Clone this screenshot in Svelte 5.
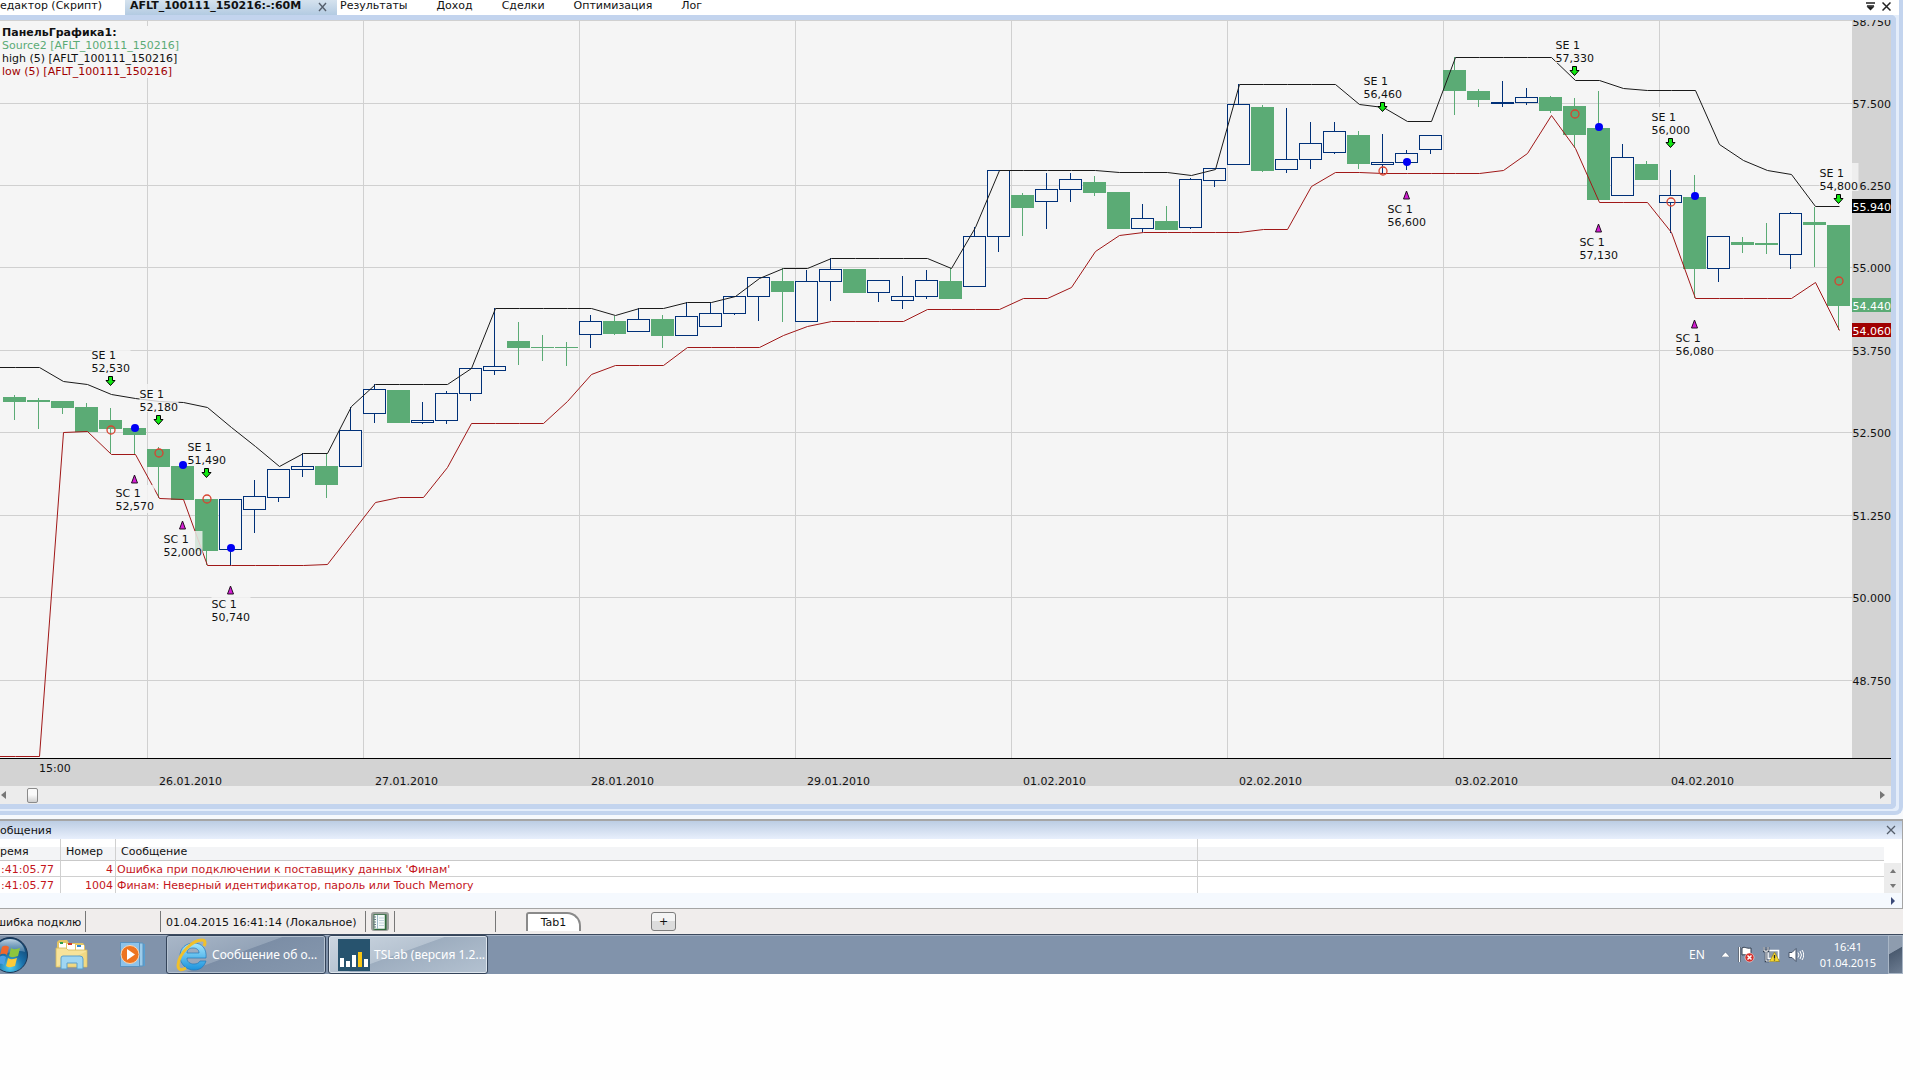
<script>
  const tabs = ['Результаты', 'Доход', 'Сделки', 'Оптимизация', 'Лог'];

  // body top, body bottom, wick top, wick bottom, 1 = falling (filled)
  const bars = [
    [397, 402, 395, 420, 1], [400, 402, 398, 429, 1], [401, 408, 401, 414, 1],
    [407, 432, 403, 432, 1], [420, 429, 408, 454, 1], [428, 435, 428, 454, 1],
    [449, 467, 447, 498, 1], [466, 500, 466, 500, 1], [499, 551, 499, 565, 1],
    [499, 550, 499, 565, 0], [496, 510, 480, 533, 0], [469, 498, 469, 502, 0],
    [466, 470, 453, 477, 0], [466, 485, 454, 498, 1], [430, 467, 407, 467, 0],
    [389, 414, 384, 423, 0], [390, 423, 390, 423, 1], [420, 423, 402, 424, 0],
    [393, 421, 391, 424, 0], [368, 394, 368, 401, 0], [366, 371, 308, 375, 0],
    [341, 348, 322, 365, 1], [347, 348, 335, 361, 1], [347, 348, 342, 366, 1],
    [321, 335, 315, 348, 0], [321, 334, 316, 335, 1], [319, 332, 308, 332, 0],
    [319, 336, 315, 348, 1], [316, 336, 302, 336, 0], [313, 327, 302, 327, 0],
    [296, 314, 296, 315, 0], [277, 297, 277, 321, 0], [281, 292, 268, 322, 1],
    [281, 322, 270, 322, 0], [269, 282, 258, 301, 0], [269, 293, 269, 293, 1],
    [280, 293, 280, 302, 0], [296, 301, 276, 309, 0], [280, 297, 270, 299, 0],
    [281, 299, 268, 299, 1], [236, 287, 227, 287, 0], [170, 237, 170, 252, 0],
    [195, 208, 193, 236, 1], [189, 202, 173, 229, 0], [179, 190, 173, 202, 0],
    [182, 193, 176, 196, 1], [192, 229, 192, 229, 1], [218, 229, 204, 232, 0],
    [221, 230, 206, 230, 1], [179, 228, 178, 229, 0], [168, 181, 168, 187, 0],
    [104, 165, 84, 165, 0], [107, 171, 105, 172, 1], [159, 170, 108, 173, 0],
    [143, 160, 122, 169, 0], [131, 153, 122, 154, 0], [135, 164, 131, 169, 1],
    [162, 165, 134, 173, 0], [153, 163, 150, 170, 0], [135, 150, 135, 154, 0],
    [70, 91, 57, 115, 1], [91, 100, 89, 107, 1], [102, 104, 81, 107, 0],
    [97, 103, 88, 105, 0], [97, 111, 96, 113, 1], [106, 135, 98, 148, 1],
    [128, 200, 91, 200, 1], [157, 196, 144, 196, 0], [164, 180, 161, 180, 1],
    [195, 203, 170, 233, 0], [197, 269, 175, 298, 1], [236, 269, 236, 282, 0],
    [242, 245, 237, 253, 1], [243, 245, 223, 254, 1], [213, 255, 212, 269, 0],
    [222, 225, 207, 267, 1], [225, 306, 225, 330, 1]
  ];

  const high = [
    367, 367, 381, 384, 394, 398, 401, 402, 407, 427, 446, 466, 453, 453, 406, 384, 384, 384, 384,
    368, 308, 308, 308, 308, 308, 315, 308, 308, 302, 302, 296, 278, 268, 268, 258, 258, 258, 258,
    258, 268, 227, 170, 170, 170, 170, 170, 172, 172, 172, 175, 169, 84, 84, 84, 84, 84, 104, 107,
    121, 121, 57, 57, 57, 57, 57, 80, 80, 88, 90, 90, 90, 144, 160, 170, 174, 206, 206
  ];

  const low = [
    756, 756, 432, 431, 454, 454, 498, 499, 565, 565, 565, 565, 565, 564, 533, 502, 497, 497, 467,
    423, 423, 423, 423, 401, 374, 365, 365, 365, 347, 347, 347, 347, 335, 326, 321, 321, 321, 321,
    309, 309, 309, 309, 298, 298, 287, 251, 235, 232, 232, 232, 232, 232, 229, 229, 186, 172, 172,
    173, 173, 173, 173, 173, 170, 153, 115, 148, 202, 202, 202, 232, 298, 298, 298, 298, 298, 282,
    330
  ];

  const STEP = 24;
  const cx = (i) => 14.5 + STEP * i;
  const line = (ys) => `0,${ys[0] + 0.5} ` + ys.map((y, i) => `${cx(i) + 1},${y + 0.5}`).join(' ');

  // bar index, marker y, fill y, price
  const entries = [
    [4, 376, 430, '52,530'], [6, 415, 453, '52,180'], [8, 468, 499, '51,490'],
    [57, 102, 171, '56,460'], [65, 66, 114, '57,330'], [69, 138, 202, '56,000'],
    [76, 194, 281, '54,800']
  ];
  const exits = [
    [5, 474, 428, '52,570'], [7, 520, 465, '52,000'], [9, 585, 548, '50,740'],
    [58, 190, 162, '56,600'], [66, 223, 127, '57,130'], [70, 319, 196, '56,080']
  ];

  const prices = [
    ['58.750', 21], ['57.500', 103], ['6.250', 185], ['55.000', 267], ['53.750', 350],
    ['52.500', 432], ['51.250', 515], ['50.000', 597], ['48.750', 680]
  ];
  const days = [
    '26.01.2010', '27.01.2010', '28.01.2010', '29.01.2010',
    '01.02.2010', '02.02.2010', '03.02.2010', '04.02.2010'
  ];
  const tags = [['55.940', 199, '#000000'], ['54.440', 298, '#5bab75'], ['54.060', 323, '#a00000']];

  const messages = [
    { time: ':41:05.77', code: 4, text: "Ошибка при подключении к поставщику данных 'Финам'" },
    { time: ':41:05.77', code: 1004, text: 'Финам: Неверный идентификатор, пароль или Touch Memory' }
  ];

  let scroll = $state(7);
</script>

<div class="screen">
  <main class="document">
    <nav class="tabs">
      <a class="first" href="#script">едактор (Скрипт)</a>
      <div class="current">
        <a href="#chart">AFLT_100111_150216:-:60М</a>
        <button aria-label="Закрыть вкладку">
          <svg width="10" height="10" viewBox="0 0 10 10"><path d="M1 1l7 8M8 1l-7 8" stroke="#555e6b" stroke-width="1.4" /></svg>
        </button>
      </div>
      {#each tabs as tab}
        <a class="tab" href="#{tab}">{tab}</a>
      {/each}
      <div class="tools">
        <button aria-label="Список вкладок">
          <svg width="9" height="9" viewBox="0 0 9 9"><path d="M0 1h9M1 4h7" stroke="#222" stroke-width="1.5" /><path d="M0.500 4.500h8l-4 4z" fill="#222" /></svg>
        </button>
        <button aria-label="Закрыть">
          <svg width="9" height="9" viewBox="0 0 9 9"><path d="M0.500 0.500l8 8M8.500 0.500l-8 8" stroke="#222" stroke-width="1.5" /></svg>
        </button>
      </div>
    </nav>

    <section class="pane">
      <div class="legend">
        <strong>ПанельГрафика1:</strong>
        <span class="source">Source2 [AFLT_100111_150216]</span>
        <span>high (5) [AFLT_100111_150216]</span>
        <span class="low">low (5) [AFLT_100111_150216]</span>
      </div>

      <svg class="chart" viewBox="0 20 1891 766">
        <rect x="0" y="20" width="1852" height="738" fill="#f5f5f5" />
        <rect x="1852" y="20" width="39" height="738" fill="#d3d3d3" />
        <rect x="0" y="758" width="1891" height="28" fill="#d3d3d3" />

        <g class="grid">
          <path d="M0 20.500H1852" />
          {#each prices.slice(1) as [, y]}
            <path d="M0 {y + 0.5}H1852" />
          {/each}
          {#each days as _, i}
            <path d="M{147.5 + i * 216} 20V758" />
          {/each}
        </g>

        {#each prices as [label, y]}
          <text class="price" x="1891" y={y + 5}>{label}</text>
        {/each}

        <g class="bars">
          {#each bars as [top, bottom, hi, lo, down], i}
            {#if down}
              <path d="M{cx(i)} {hi}V{lo}" stroke="#5bab75" />
              <rect x={cx(i) - 11.5} y={top} width="23" height={bottom - top} fill="#5bab75" />
            {:else}
              <path d="M{cx(i)} {hi}V{lo}" stroke="#003078" />
              <rect x={cx(i) - 11} y={top + 0.5} width="22" height={bottom - top - 1} fill="#f5f5f5" stroke="#003078" />
            {/if}
          {/each}
        </g>

        <polyline points={line(high)} fill="none" stroke="#1a1a1a" />
        <polyline points={line(low)} fill="none" stroke="#a01818" />

        {#each tags as [label, y, color]}
          <rect x="1852" {y} width="39" height="14" fill={color} />
          <text class="price tag" x="1891" y={y + 12}>{label}</text>
        {/each}

        {#each entries as [i, y, fillY, price]}
          <rect class="halo" x={cx(i) - 19} y={y - 31} width="39" height="28" />
          <text x={cx(i) - 19} y={y - 17}>SE 1</text>
          <text x={cx(i) - 19} y={y - 4}>{price}</text>
          <path d="M{cx(i) - 2} {y + 0.5}h4v4h2.500l-4.500 5l-4.500 -5h2.500z" fill="#12e812" stroke="#000" />
          <circle cx={cx(i) + 0.5} cy={fillY} r="4" fill="none" stroke="#d8432f" stroke-width="1.300" />
        {/each}

        {#each exits as [i, y, fillY, price]}
          <rect class="halo" x={cx(i) - 19} y={y + 11} width="39" height="28" />
          <text x={cx(i) - 19} y={y + 23}>SC 1</text>
          <text x={cx(i) - 19} y={y + 36}>{price}</text>
          <path d="M{cx(i)} {y + 1}l3 8h-6z" fill="#d41cd4" stroke="#221022" />
          <circle cx={cx(i) + 0.5} cy={fillY} r="4" fill="#0000f5" />
        {/each}

        <path d="M0 758.500H1891" stroke="#000" />
        <text x="39" y="772">15:00</text>
        {#each days as day, i}
          <text x={159 + i * 216} y="785">{day}</text>
        {/each}
      </svg>

      <div class="hscroll">
        <button aria-label="Назад"><svg width="5" height="8" viewBox="0 0 5 8"><path d="M5 0v8L0 4z" fill="#777" /></svg></button>
        <input type="range" min="0" max="1000" bind:value={scroll} aria-label="Прокрутка графика" />
        <button aria-label="Вперёд"><svg width="5" height="8" viewBox="0 0 5 8"><path d="M0 0v8l5-4z" fill="#777" /></svg></button>
      </div>
    </section>
  </main>

  <section class="messages">
    <header>
      <span>общения</span>
      <button aria-label="Закрыть сообщения">
        <svg width="10" height="10" viewBox="0 0 10 10"><path d="M1 1l8 8M9 1l-8 8" stroke="#555e6b" stroke-width="1.300" /></svg>
      </button>
    </header>
    <div class="log">
      <table>
        <colgroup><col class="c-time" /><col class="c-code" /><col class="c-text" /><col /></colgroup>
        <thead>
          <tr><th>ремя</th><th>Номер</th><th>Сообщение</th><th></th></tr>
        </thead>
        <tbody>
          {#each messages as m}
            <tr><td>{m.time}</td><td class="num">{m.code}</td><td>{m.text}</td><td></td></tr>
          {/each}
        </tbody>
      </table>
      <div class="vscroll">
        <button aria-label="Вверх"><svg width="6" height="4" viewBox="0 0 6 4"><path d="M0 4h6L3 0z" fill="#777" /></svg></button>
        <button aria-label="Вниз"><svg width="6" height="4" viewBox="0 0 6 4"><path d="M0 0h6L3 4z" fill="#777" /></svg></button>
      </div>
    </div>
    <div class="strip">
      <button aria-label="Вправо"><svg width="4" height="8" viewBox="0 0 4 8"><path d="M0 0v8l4-4z" fill="#3b4a78" /></svg></button>
    </div>
  </section>

  <div class="status">
    <span class="cell state"><span>шибка подключения</span></span>
    <span class="cell blank"></span>
    <span class="cell clock">01.04.2015 16:41:14 (Локальное)</span>
    <span class="cell note">
      <button aria-label="Журнал">
        <svg width="14" height="16" viewBox="0 0 14 16">
          <rect x="1" y="0.500" width="12" height="15" fill="#f4faf8" stroke="#4c7a58" />
          <path d="M12.500 1v14.500H2" fill="none" stroke="#2f6b3c" stroke-width="1.500" />
          <path d="M4.500 1v14" stroke="#9db8c8" />
          <path d="M6 4h5M6 6.500h5M6 9h5M6 11.500h5" stroke="#c2d3dc" />
          <path d="M0 3h3M0 5.500h3M0 8h3M0 10.500h3M0 13h3" stroke="#6d7f86" />
        </svg>
      </button>
    </span>
    <span class="cell space"></span>
    <button class="sheet">Tab1</button>
    <button class="add">+</button>
  </div>

  <footer class="taskbar">
    <button class="start" aria-label="Пуск">
      <svg width="30" height="38" viewBox="0 0 30 38">
        <defs>
          <radialGradient id="orb" cx="0.500" cy="0.850" r="0.850">
            <stop offset="0" stop-color="#4fd0f2" />
            <stop offset="0.450" stop-color="#1b70aa" />
            <stop offset="1" stop-color="#12395f" />
          </radialGradient>
          <linearGradient id="gloss" x1="0" y1="0" x2="0" y2="1">
            <stop offset="0" stop-color="#d4e6f2" stop-opacity="0.900" />
            <stop offset="1" stop-color="#6d9cc0" stop-opacity="0.400" />
          </linearGradient>
        </defs>
        <circle cx="10" cy="19" r="17.500" fill="url(#orb)" stroke="#1c3554" />
        <path d="M-5 17C-4 7 3 3 10 3s14 4 15 13c-9-4-21 5-30 1z" fill="url(#gloss)" />
        <path d="M2 11c3-2 5-1 7 0l-2 8c-2-1-4-2-7 0z" fill="#f0672c" />
        <path d="M11 12c3 2 6 1 9 0l-2 8c-3 1-6 2-9 0z" fill="#8cc63e" />
        <path d="M-1 21c3-2 5-1 7 0l-2 8c-2-1-4-2-7 0z" fill="#4aa0e6" />
        <path d="M8 22c3 2 6 1 9 0l-2 8c-3 1-6 2-9 0z" fill="#fccb3a" />
      </svg>
    </button>
    <button class="pin folder" aria-label="Проводник">
      <svg width="34" height="32" viewBox="0 0 34 32">
        <path d="M2 3l2-2h8l2 3h14l2 3v20H2z" fill="#e3c464" />
        <path d="M4 4h7v6H4zM12 5h8v6h-8zM21 6h8v6h-8z" fill="#fff" />
        <path d="M5 3h3v2H5z" fill="#2f9e4b" /><path d="M13 4h4v2h-4z" fill="#d33a2a" /><path d="M22 6h4v2h-4z" fill="#2e86d0" />
        <path d="M1 9h10l2 2h19v17H1z" fill="#f7e39a" stroke="#d4b85c" stroke-width="0.800" />
        <path d="M1 28L32 12v16z" fill="#edd075" opacity="0.600" />
        <path d="M6 30V19q0-2 2-2h17q3 0 3 3v10h-6v-6H12v6z" fill="#9fd6f2" stroke="#5b9fcb" />
      </svg>
    </button>
    <button class="pin player" aria-label="Проигрыватель">
      <svg width="30" height="28" viewBox="0 0 30 28">
        <path d="M8 2l18 1v22l-18 1z" fill="#5a9fd0" /><path d="M7 2h17v23H7z" fill="#9dcbe9" stroke="#5a93bf" />
        <rect x="1.500" y="1.500" width="19" height="24" fill="#8dc3ea" stroke="#5b93bf" />
        <circle cx="11" cy="13.500" r="9" fill="#ee7420" stroke="#fbd5b0" />
        <path d="M8 8v11l8-5.500z" fill="#fff" />
      </svg>
    </button>
    <button class="task">
      <svg width="32" height="34" viewBox="0 0 32 34">
        <defs>
          <linearGradient id="ie" x1="0" y1="0" x2="0" y2="1">
            <stop offset="0" stop-color="#a4e7fd" />
            <stop offset="1" stop-color="#1b93dd" />
          </linearGradient>
        </defs>
        <path d="M30 20H11c0 4 3 6 7 6 3 0 5-1 6-3h6c-2 6-6 9-12 9C10 32 4 26 4 18S10 5 18 5s13 6 12 15zM11 15h12c0-3-2-5-6-5s-6 2-6 5z" fill="url(#ie)" stroke="#2179ba" stroke-width="0.700" />
        <path d="M28 8c2-4 1-6-2-6C17 2 3 15 2 27c0 5 3 6 8 3" fill="none" stroke="#f0c02c" stroke-width="3" />
      </svg>
      <span>Сообщение об о...</span>
    </button>
    <button class="task active">
      <svg width="32" height="32" viewBox="0 0 32 32">
        <rect width="32" height="32" fill="#27536e" />
        <path d="M2 19h4v9H2zM8 22h4v6H8zM14 16h4v12h-4zM26 20h4v8h-4z" fill="#fff" />
        <path d="M20 13h4v15h-4z" fill="#f8c614" />
      </svg>
      <span>TSLab (версия 1.2...</span>
    </button>
    <div class="tray">
      <span class="lang">EN</span>
      <button aria-label="Скрытые значки"><svg width="9" height="5" viewBox="0 0 9 5"><path d="M0 5h9L4.500 0z" fill="#fff" stroke="#4a5a70" stroke-width="0.500" /></svg></button>
      <button aria-label="Центр поддержки">
        <svg width="17" height="17" viewBox="0 0 17 17">
          <path d="M1.500 1v15" stroke="#333f50" stroke-width="3" /><path d="M1.500 1v15" stroke="#fff" stroke-width="1.500" />
          <path d="M4 2c3-2 4 1 9 0v7c-4 1-6-1-9 0z" fill="#fff" stroke="#333f50" />
          <circle cx="11.500" cy="11.500" r="4.500" fill="#d5302c" stroke="#fff" stroke-width="0.500" />
          <path d="M9.500 9.500l4 4M13.500 9.500l-4 4" stroke="#fff" stroke-width="1.500" />
        </svg>
      </button>
      <button aria-label="Сеть">
        <svg width="17" height="17" viewBox="0 0 17 17">
          <path d="M5 4.500h10.500v8H5zM6 15h7" fill="#8b98a8" stroke="#fff" stroke-width="1.500" />
          <path d="M1 1v4h4V1M3 5v10h3" fill="none" stroke="#333f50" stroke-width="2.500" />
          <path d="M1 1v4h4V1M3 5v10h3" fill="none" stroke="#fff" />
          <path d="M11.500 6l5 9.500h-10z" fill="#f8d92c" stroke="#8a7714" stroke-width="0.600" />
          <path d="M11.500 9v3.500M11.500 13.500v1" stroke="#222" stroke-width="1.300" />
        </svg>
      </button>
      <button aria-label="Громкость">
        <svg width="16" height="14" viewBox="0 0 16 14">
          <path d="M1 4.500h3l4-4v13l-4-4H1z" fill="#fff" stroke="#46546a" />
          <path d="M10 4.500q2 2.500 0 5M12 3q3 4 0 8M14 2q3.500 5 0 10" fill="none" stroke="#fff" />
        </svg>
      </button>
      <time>16:41<br />01.04.2015</time>
      <button class="desktop" aria-label="Свернуть все окна"></button>
    </div>
  </footer>
</div>

<style>
  :global(body) {
    background: #fefefe;
  }

  .screen {
    margin-right: 17px;
    background: #f7f9fc;
    color: #111;
    font-family: 'DejaVu Sans', Verdana, sans-serif;
    font-size: 11px;
    line-height: 13px;
    overflow: hidden;
  }

  button {
    display: inline-flex;
    align-items: center;
    justify-content: center;
    padding: 0;
    border: 0;
    background: none;
    color: inherit;
    font: inherit;
  }

  a {
    color: inherit;
    text-decoration: none;
  }

  svg {
    display: block;
    flex-shrink: 0;
  }

  /* document window */
  .document {
    padding: 0 3px 2px 0;
    background: #e4edfa;
    border: solid #c3d4ee;
    border-width: 0 4px 4px 0;
    border-radius: 0 0 8px 0;
  }

  .tabs {
    display: flex;
    height: 15px;
    margin-right: -3px;
    background: #fff;
    line-height: 12px;
    white-space: nowrap;
  }

  .first {
    width: 125px;
  }

  .current {
    display: flex;
    justify-content: space-between;
    align-items: flex-start;
    width: 198px;
    padding: 0 9px 0 5px;
    background: linear-gradient(#d5e2ee, #b3cbe2);
    font-weight: 700;
  }

  .current button {
    margin-top: 2px;
  }

  .tab {
    margin: 0 26px 0 3px;
  }

  .tools {
    display: flex;
    gap: 7px;
    align-items: center;
    margin: 0 8px 2px auto;
  }

  .pane {
    position: relative;
    background: #ececec;
    border: solid #c3d4ee;
    border-width: 5px 5px 5px 0;
    border-radius: 0 5px 5px 0;
  }

  .legend {
    position: absolute;
    top: 6px;
    left: 0;
    display: flex;
    flex-direction: column;
    padding-left: 2px;
    background: #f5f5f5;
  }

  .source {
    color: #5bab75;
  }

  .low {
    color: #a00000;
  }

  .chart {
    width: 100%;
    height: auto;
  }

  .chart text {
    font-size: 11px;
    fill: #111;
  }

  .chart .price {
    text-anchor: end;
  }

  .chart .tag {
    fill: #fff;
  }

  .grid path {
    stroke: #d0d0d0;
  }

  .bars {
    shape-rendering: crispEdges;
  }

  .halo {
    fill: #f5f5f5;
    opacity: 0.8;
  }

  .hscroll {
    display: flex;
    height: 18px;
  }

  .hscroll button {
    width: 14px;
    padding-right: 8px;
  }

  .hscroll button:last-child {
    padding: 0 4px 0 0;
  }

  .hscroll input {
    flex: 1;
    margin: 0;
    appearance: none;
    background: none;
  }

  .hscroll input::-webkit-slider-thumb {
    appearance: none;
    box-sizing: border-box;
    width: 11px;
    height: 15px;
    border: 1px solid #8a8a8a;
    border-radius: 2px;
    background: linear-gradient(#fafafa 45%, #cfcfcf);
  }

  /* messages */
  .messages {
    margin-top: 4px;
    border: solid #a5a5a5;
    border-width: 2px 1px 1px 0;
    background: #fff;
  }

  .messages header {
    display: flex;
    align-items: center;
    justify-content: space-between;
    height: 18px;
    padding: 0 6px 0 0;
    background: linear-gradient(#bccde3, #e8effc);
  }

  .log {
    display: flex;
    align-items: flex-end;
  }

  table {
    flex: 1;
    table-layout: fixed;
    border-collapse: separate;
    border-spacing: 0;
  }

  .c-time {
    width: 61px;
  }

  .c-code {
    width: 55px;
  }

  .c-text {
    width: 1082px;
  }

  th,
  td {
    box-sizing: border-box;
    padding: 0;
    border-right: 1px solid #d0d0d0;
    font-weight: 400;
    text-align: left;
    white-space: nowrap;
  }

  th {
    height: 22px;
    padding: 3px 0 0 5px;
    border-bottom: 1px solid #c9c9c9;
    background: linear-gradient(#fff 40%, #f3f4f6 40%);
  }

  th:first-child {
    padding-left: 0;
  }

  th:last-child,
  td:last-child {
    border-right: 0;
  }

  td {
    height: 16px;
    padding: 1px 0 0 1px;
    border-bottom: 1px solid #d0d0d0;
    color: #c4161c;
  }

  tr:last-child td {
    border-bottom: 0;
  }

  .num {
    padding-right: 2px;
    text-align: right;
  }

  .vscroll {
    display: flex;
    flex-direction: column;
    width: 17px;
    margin-right: 1px;
    background: #ececec;
  }

  .vscroll button {
    height: 15px;
  }

  .strip {
    display: flex;
    justify-content: flex-end;
    height: 15px;
    padding-right: 7px;
    background: #f5f9fe;
  }

  /* status bar */
  .status {
    display: flex;
    height: 25px;
    background: #f0edec;
  }

  .cell {
    box-sizing: border-box;
    display: flex;
    align-items: center;
    height: 21px;
    margin-top: 2px;
    padding-top: 1px;
    border-right: 1px solid #777;
    white-space: nowrap;
  }

  .state {
    width: 86px;
    padding-right: 4px;
  }

  .state span {
    overflow: hidden;
    text-indent: -4px;
  }

  .blank {
    width: 75px;
  }

  .clock {
    width: 205px;
    padding-left: 5px;
  }

  .note {
    justify-content: center;
    width: 29px;
    padding-top: 0;
  }

  .note button {
    width: 18px;
    height: 19px;
    border-radius: 3px;
    background: #9b9f9b;
  }

  .space {
    width: 101px;
  }

  .sheet {
    width: 55px;
    height: 19px;
    margin: 3px 0 0 30px;
    border: solid #8a8a8a;
    border-width: 2px 2px 0;
    border-radius: 3px 14px 0 0;
    background: #fff;
  }

  .add {
    width: 25px;
    height: 19px;
    margin: 3px 0 0 70px;
    border: 1px solid #7d7d7d;
    border-radius: 3px;
    background: linear-gradient(#f4f4f4 50%, #dcdcdc 50%);
  }

  /* taskbar */
  .taskbar {
    box-sizing: border-box;
    display: flex;
    height: 40px;
    border-top: 1px solid #3c4a5e;
    background: #8193ab;
    box-shadow: inset 0 1px #a2b0c3;
    color: #fff;
    font-family: 'Noto Sans', 'Open Sans', sans-serif;
    font-size: 12px;
  }

  .pin {
    width: 34px;
  }

  .folder {
    margin-left: 25px;
  }

  .player {
    margin: 0 15px 0 28px;
  }

  .task {
    box-sizing: border-box;
    justify-content: flex-start;
    gap: 4px;
    width: 160px;
    margin-right: 2px;
    padding-left: 9px;
    border: 1px solid #34445a;
    border-radius: 3px;
    background: linear-gradient(160deg, #a9b7c8 0%, #94a4b8 45%, #7c8ea6 46%, #8698ae 100%);
    box-shadow: inset 0 0 0 1px #b5c2d1;
    white-space: nowrap;
  }

  .active {
    background: linear-gradient(160deg, #ccd6e1 0%, #b6c3d1 45%, #9dadbf 46%, #b4c2d1 100%);
    box-shadow: inset 0 0 0 1px #dde5ed;
  }

  .tray {
    display: flex;
    align-items: center;
    gap: 8px;
    margin-left: auto;
  }

  .lang {
    margin-right: 8px;
  }

  .tray time {
    margin: 0 4px 0 8px;
    font-size: 11px;
    line-height: 16px;
    text-align: center;
  }

  .desktop {
    align-self: stretch;
    width: 15px;
    border: 1px solid #a9b6c6;
    background: linear-gradient(150deg, #8e9cae 40%, #4b5b70 42%, #6d7d92);
  }
</style>
